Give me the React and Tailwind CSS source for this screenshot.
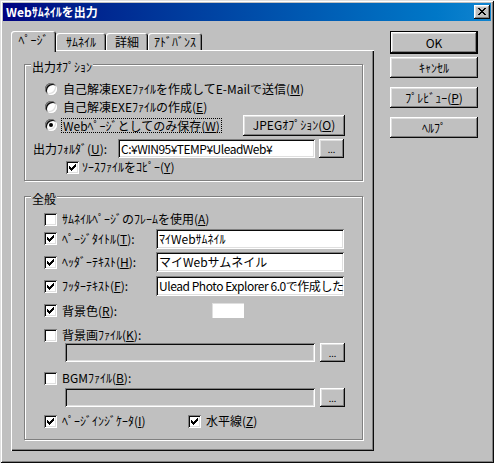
import React from "react";

const raised =
  "shadow-[inset_-1px_-1px_#0a0a0a,inset_1px_1px_#ffffff,inset_-2px_-2px_#808080,inset_2px_2px_#dfdfdf]";
const sunken =
  "shadow-[inset_1px_1px_#808080,inset_-1px_-1px_#ffffff,inset_2px_2px_#0a0a0a,inset_-2px_-2px_#dfdfdf]";
const etched = "border border-[#808080] shadow-[inset_1px_1px_#ffffff,1px_1px_#ffffff]";
const tab = "shadow-[inset_1px_1px_#ffffff,inset_-1px_0_#0a0a0a,inset_-2px_0_#808080]";

// pixel check mark, rows of [x, y, w]
const CHECK = [
  [6, 0, 1],
  [5, 1, 2],
  [0, 2, 1],
  [4, 2, 3],
  [0, 3, 2],
  [3, 3, 3],
  [0, 4, 5],
  [1, 5, 3],
  [2, 6, 1],
];

const CROSS = [
  [0, 0, 2], [6, 0, 2],
  [1, 1, 2], [5, 1, 2],
  [2, 2, 4],
  [3, 3, 2],
  [2, 4, 4],
  [1, 5, 2], [5, 5, 2],
  [0, 6, 2], [6, 6, 2],
];

function Pixels({ rows, w, h }) {
  return (
    <svg width={w} height={h} viewBox={`0 0 ${w} ${h}`} shapeRendering="crispEdges">
      {rows.map(([x, y, len], i) => (
        <rect key={i} x={x} y={y} width={len} height="1" fill="#000" />
      ))}
    </svg>
  );
}

function Check({ checked }) {
  return (
    <span className={`flex h-[13px] w-[13px] shrink-0 items-center justify-center bg-white ${sunken}`}>
      {checked && <Pixels rows={CHECK} w={7} h={7} />}
    </span>
  );
}

function Radio({ on }) {
  return (
    <span className={`flex h-[12px] w-[12px] shrink-0 items-center justify-center rounded-full bg-white ${sunken}`}>
      {on && <span className="h-[4px] w-[4px] rounded-full bg-black" />}
    </span>
  );
}

function Btn({ children, className = "" }) {
  return (
    <div className={`flex items-center justify-center bg-[#c0c0c0] ${raised} ${className}`}>{children}</div>
  );
}

function Dots() {
  return (
    <Btn className="h-[19px] w-[25px] shrink-0 items-end pb-[4px]">
      <span className="text-[9px] leading-[9px]">...</span>
    </Btn>
  );
}

function Field({ children, className = "", disabled = false }) {
  return (
    <div
      className={`flex items-center overflow-hidden whitespace-nowrap pl-[3px] ${
        disabled ? "bg-[#c0c0c0]" : "bg-white"
      } ${sunken} ${className}`}
    >
      {children}
    </div>
  );
}

const U = ({ children }) => <u className="underline-offset-1">{children}</u>;

export default function App() {
  return (
    <div className="h-[463px] w-[494px] bg-[#c0c0c0] p-[3px] font-['Noto_Sans_CJK_JP','Noto_Sans',sans-serif] text-[12px] leading-[14px] text-black shadow-[inset_1px_1px_#dfdfdf,inset_-1px_-1px_#0a0a0a,inset_2px_2px_#ffffff,inset_-2px_-2px_#808080]">
      <div className="flex h-[18px] items-center justify-between bg-linear-to-r from-[#000080] to-[#1084d0] pl-[3px] pr-[1px]">
        <span className="font-bold text-white">Webｻﾑﾈｲﾙを出力</span>
        <Btn className="h-[14px] w-[16px] pb-[1px]">
          <Pixels rows={CROSS} w={8} h={7} />
        </Btn>
      </div>

      <div className="flex pl-[8px] pt-[10px]">
        <div className="w-[363px]">
          {/* tabs */}
          <div className="flex h-[19px] items-end">
            <div className={`relative z-10 -mb-[2px] flex h-[21px] w-[45px] items-center justify-center rounded-t-[3px] bg-[#c0c0c0] pb-[3px] ${tab}`}>
              ﾍﾟｰｼﾞ
            </div>
            <div className={`flex h-[17px] w-[50px] items-center justify-center rounded-t-[3px] ${tab}`}>ｻﾑﾈｲﾙ</div>
            <div className={`flex h-[17px] w-[42px] items-center justify-center rounded-t-[3px] ${tab}`}>詳細</div>
            <div className={`flex h-[17px] w-[54px] items-center justify-center rounded-t-[3px] ${tab}`}>ｱﾄﾞﾊﾞﾝｽ</div>
          </div>

          {/* tab page */}
          <div className="h-[401px] pl-[13px] pt-[14px] shadow-[inset_1px_1px_#ffffff,inset_-1px_-1px_#0a0a0a,inset_-2px_-2px_#808080]">
            <div className={`h-[117px] w-[339px] ${etched}`}>
              <div className="-mt-[4px] ml-[6px] h-[12px] w-fit bg-[#c0c0c0] px-[1px] leading-[12px]">出力ｵﾌﾟｼｮﾝ</div>

              <div className="ml-[20px] mt-[7px] flex h-[18px] items-center gap-[6px]">
                <Radio />
                <span>
                  自己解凍EXEﾌｧｲﾙを作成してE-Mailで送信(<U>M</U>)
                </span>
              </div>
              <div className="ml-[20px] flex h-[18px] items-center gap-[6px]">
                <Radio />
                <span>
                  自己解凍EXEﾌｧｲﾙの作成(<U>E</U>)
                </span>
              </div>
              <div className="ml-[20px] mr-[17px] flex h-[18px] items-center gap-[4px]">
                <Radio on />
                <span className="border border-dotted border-black px-[1px] leading-[13px]">
                  Webﾍﾟｰｼﾞとしてのみ保存(<U>W</U>)
                </span>
                <Btn className="ml-auto h-[21px] w-[102px] shrink-0">
                  JPEGｵﾌﾟｼｮﾝ(<U>O</U>)
                </Btn>
              </div>

              <div className="ml-[8px] mt-[5px] flex h-[19px] items-center">
                <span className="w-[85px] shrink-0">
                  出力ﾌｫﾙﾀﾞ(<U>U</U>):
                </span>
                <Field className="h-[19px] w-[197px] tracking-[-0.5px]">C:¥WIN95¥TEMP¥UleadWeb¥</Field>
                <div className="ml-[4px]">
                  <Dots />
                </div>
              </div>

              <div className="ml-[41px] mt-[1px] flex h-[16px] items-center gap-[3px]">
                <Check checked />
                <span>
                  ｿｰｽﾌｧｲﾙをｺﾋﾟｰ(<U>Y</U>)
                </span>
              </div>
            </div>

            <div className={`mt-[15px] h-[244px] w-[339px] ${etched}`}>
              <div className="-mt-[4px] ml-[6px] h-[12px] w-fit bg-[#c0c0c0] px-[1px] leading-[12px]">全般</div>

              <div className="ml-[19px] mt-[6px] flex h-[16px] items-center gap-[5px]">
                <Check />
                <span>
                  ｻﾑﾈｲﾙﾍﾟｰｼﾞのﾌﾚｰﾑを使用(<U>A</U>)
                </span>
              </div>

              <div className="ml-[19px] flex h-[23px] items-center">
                <div className="flex w-[112px] shrink-0 items-center gap-[5px]">
                  <Check checked />
                  <span>
                    ﾍﾟｰｼﾞﾀｲﾄﾙ(<U>T</U>):
                  </span>
                </div>
                <Field className="h-[20px] w-[188px]">ﾏｲWebｻﾑﾈｲﾙ</Field>
              </div>
              <div className="ml-[19px] flex h-[24px] items-center">
                <div className="flex w-[112px] shrink-0 items-center gap-[5px]">
                  <Check checked />
                  <span>
                    ﾍｯﾀﾞｰﾃｷｽﾄ(<U>H</U>):
                  </span>
                </div>
                <Field className="h-[20px] w-[188px]">マイWebサムネイル</Field>
              </div>
              <div className="ml-[19px] flex h-[24px] items-center">
                <div className="flex w-[112px] shrink-0 items-center gap-[5px]">
                  <Check checked />
                  <span>
                    ﾌｯﾀｰﾃｷｽﾄ(<U>F</U>):
                  </span>
                </div>
                <Field className="h-[20px] w-[188px] tracking-[-0.45px]">Ulead Photo Explorer 6.0で作成した</Field>
              </div>

              <div className="ml-[19px] flex h-[25px] items-center">
                <div className="flex w-[168px] shrink-0 items-center gap-[5px]">
                  <Check checked />
                  <span>
                    背景色(<U>R</U>):
                  </span>
                </div>
                <div className="h-[15px] w-[32px] bg-white shadow-[inset_1px_1px_#dfdfdf]" />
              </div>

              <div className="ml-[19px] mt-[4px] flex h-[16px] items-center gap-[5px]">
                <Check />
                <span>
                  背景画ﾌｧｲﾙ(<U>K</U>):
                </span>
              </div>
              <div className="ml-[40px] flex h-[19px] items-center gap-[5px]">
                <Field disabled className="h-[19px] w-[250px]" />
                <Dots />
              </div>

              <div className="ml-[19px] mt-[8px] flex h-[16px] items-center gap-[5px]">
                <Check />
                <span>
                  BGMﾌｧｲﾙ(<U>B</U>):
                </span>
              </div>
              <div className="ml-[40px] mt-[2px] flex h-[19px] items-center gap-[5px]">
                <Field disabled className="h-[19px] w-[250px]" />
                <Dots />
              </div>

              <div className="ml-[19px] mt-[6px] flex h-[16px] items-center">
                <div className="flex w-[144px] shrink-0 items-center gap-[5px]">
                  <Check checked />
                  <span>
                    ﾍﾟｰｼﾞｲﾝｼﾞｹｰﾀ(<U>I</U>)
                  </span>
                </div>
                <div className="flex items-center gap-[5px]">
                  <Check checked />
                  <span>
                    水平線(<U>Z</U>)
                  </span>
                </div>
              </div>
            </div>
          </div>
        </div>

        {/* side buttons */}
        <div className="ml-[16px] flex w-[88px] flex-col">
          <div className="h-[23px] border border-black">
            <Btn className="h-full w-full">OK</Btn>
          </div>
          <Btn className="mt-[3px] h-[21px]">ｷｬﾝｾﾙ</Btn>
          <Btn className="mt-[9px] h-[21px]">
            ﾌﾟﾚﾋﾞｭｰ(<U>P</U>)
          </Btn>
          <Btn className="mt-[9px] h-[21px]">ﾍﾙﾌﾟ</Btn>
        </div>
      </div>
    </div>
  );
}
